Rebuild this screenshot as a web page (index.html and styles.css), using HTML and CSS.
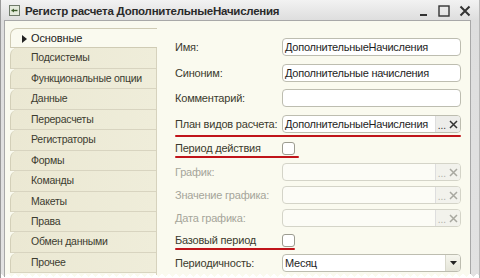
FILE: index.html
```html
<!DOCTYPE html>
<html lang="ru">
<head>
<meta charset="utf-8">
<link rel="stylesheet" href="styles.css">
</head>
<body>
<div class="window">
  <div class="titlebar">
    <svg class="app-icon" width="11" height="11" viewBox="0 0 11 11"><rect x="0.5" y="0.5" width="10" height="10" fill="#e4eadc" stroke="#6f7a6a"/><path d="M2.5 5.5h6" stroke="#3b5a2a" stroke-width="1.4"/><path d="M5 3.5l-2.5 2 2.5 2" fill="#3b5a2a"/></svg>
    <span class="title">Регистр расчета ДополнительныеНачисления</span>
    <div class="controls">
      <svg width="10" height="12" viewBox="0 0 10 12"><rect x="1" y="9" width="7" height="2" fill="#333"/></svg>
      <svg width="12" height="12" viewBox="0 0 12 12"><rect x="1" y="1" width="10" height="10" fill="none" stroke="#333" stroke-width="1.4"/></svg>
      <svg width="12" height="12" viewBox="0 0 12 12"><path d="M1.5 1.5l9 9M10.5 1.5l-9 9" stroke="#333" stroke-width="2"/></svg>
    </div>
  </div>
  <div class="frame">
    <ul class="tabs">
      <li class="tab active"><span class="arrow"></span>Основные</li>
      <li class="tab">Подсистемы</li>
      <li class="tab">Функциональные опции</li>
      <li class="tab">Данные</li>
      <li class="tab">Перерасчеты</li>
      <li class="tab">Регистраторы</li>
      <li class="tab">Формы</li>
      <li class="tab">Команды</li>
      <li class="tab">Макеты</li>
      <li class="tab">Права</li>
      <li class="tab">Обмен данными</li>
      <li class="tab">Прочее</li>
    </ul>
    <div class="form">
      <div class="row r1"><span class="label">Имя:</span><div class="field"><span class="val">ДополнительныеНачисления</span></div></div>
      <div class="row r2"><span class="label">Синоним:</span><div class="field"><span class="val">Дополнительные начисления</span></div></div>
      <div class="row r3"><span class="label">Комментарий:</span><div class="field"><span class="val"></span></div></div>
      <div class="row r4 mark mark-long"><span class="label">План видов расчета:</span><div class="field"><span class="val">ДополнительныеНачисления</span><span class="btns"><span class="dots">...</span><svg class="x" width="9" height="9" viewBox="0 0 9 9"><path d="M1 1l7 7M8 1l-7 7" stroke="#333" stroke-width="1.5"/></svg></span></div></div>
      <div class="row r5 mark mark-short"><span class="label">Период действия</span><span class="check"></span></div>
      <div class="row r6 off"><span class="label">График:</span><div class="field dis"><span class="val"></span><span class="btns"><span class="dots">...</span><svg class="x" width="9" height="9" viewBox="0 0 9 9"><path d="M1 1l7 7M8 1l-7 7" stroke="#a8a8a0" stroke-width="1.5"/></svg></span></div></div>
      <div class="row r7 off"><span class="label">Значение графика:</span><div class="field dis"><span class="val"></span><span class="btns"><span class="dots">...</span><svg class="x" width="9" height="9" viewBox="0 0 9 9"><path d="M1 1l7 7M8 1l-7 7" stroke="#a8a8a0" stroke-width="1.5"/></svg></span></div></div>
      <div class="row r8 off"><span class="label">Дата графика:</span><div class="field dis"><span class="val"></span><span class="btns"><span class="dots">...</span><svg class="x" width="9" height="9" viewBox="0 0 9 9"><path d="M1 1l7 7M8 1l-7 7" stroke="#a8a8a0" stroke-width="1.5"/></svg></span></div></div>
      <div class="row r9 mark mark-short2"><span class="label">Базовый период</span><span class="check"></span></div>
      <div class="row r10"><span class="label">Периодичность:</span><div class="field"><span class="val">Месяц</span><span class="drop"><svg width="7" height="4" viewBox="0 0 7 4"><path d="M0 0h7L3.5 4z" fill="#222"/></svg></span></div></div>
    </div>
  </div>
  <div class="torn"></div>
</div>
</body>
</html>
```

FILE: styles.css
```css
* { box-sizing: border-box; }
html, body { margin: 0; padding: 0; }
body {
  width: 480px;
  height: 278px;
  overflow: hidden;
  background: #ffffff;
  font-family: "Liberation Sans", Arial, sans-serif;
}
.window {
  position: relative;
  width: 480px;
  height: 278px;
  background: linear-gradient(#f2f2f2, #dedede 20px, #e2e2e2);
  border-left: 1px solid #9a9a9a;
  border-right: 1px solid #b8b8b8;
  overflow: hidden;
}
.titlebar {
  height: 20px;
  display: flex;
  align-items: center;
  padding-left: 8px;
  padding-top: 1px;
}
.app-icon { flex: none; }
.title {
  margin-left: 5px;
  font-weight: bold;
  font-size: 11.5px;
  color: #2a2a2a;
  letter-spacing: -0.25px;
}
.controls {
  margin-left: auto;
  display: flex;
  align-items: center;
  gap: 9px;
  padding-right: 8px;
}
.frame {
  margin-left: 3px;
  width: 467px;
  height: 270px;
  border: 1px solid #a8a8a8;
  background: #fafaef;
  display: flex;
  padding: 7px 0 0 5px;
}
.tabs {
  list-style: none;
  margin: 0;
  padding: 0;
  width: 147px;
  flex: none;
  border-right: 1px solid #d6d2bd;
}
.tab {
  height: 20.45px;
  line-height: 19px;
  font-size: 10.5px;
  letter-spacing: -0.25px;
  color: #3c3c30;
  padding-left: 20px;
  background: linear-gradient(90deg, #ebe8d3, #efedda);
  border-left: 1px solid #d3cfb8;
  border-bottom: 1px solid #d8d4c0;
  border-top-left-radius: 7px;
  white-space: nowrap;
}
.tab.active {
  background: #fafaef;
  border: 1px solid #cfcbb4;
  border-right: none;
  margin-right: -1px;
  position: relative;
  padding-left: 11px;
  color: #222;
  font-size: 11px;
  letter-spacing: -0.1px;
}
.arrow {
  display: inline-block;
  width: 0; height: 0;
  border-left: 5px solid #222;
  border-top: 4px solid transparent;
  border-bottom: 4px solid transparent;
  margin-right: 4px;
  vertical-align: -1px;
}
.form {
  flex: 1;
  padding: 10px 0 0 18px;
  display: flex;
  flex-direction: column;
}
.row {
  position: relative;
  height: 18px;
  display: flex;
  align-items: center;
  font-size: 11px;
  color: #3a3a2e;
}
.r1 { margin-top: 0; }
.r2 { margin-top: 8px; }
.r3 { margin-top: 7px; }
.r4 { margin-top: 8px; }
.r5 { margin-top: 6px; }
.r6 { margin-top: 6px; }
.r7 { margin-top: 5px; }
.r8 { margin-top: 5px; }
.r9 { margin-top: 4px; }
.r10 { margin-top: 5px; }
.label {
  width: 107px;
  flex: none;
  white-space: nowrap;
  letter-spacing: -0.2px;
}
.off .label { color: #a5a59a; }
.field {
  width: 179px;
  height: 18px;
  background: #ffffff;
  border: 1px solid #bdbdb0;
  border-radius: 4px;
  display: flex;
  align-items: center;
  overflow: hidden;
}
.field.dis { background: #fcfcf6; border-color: #d4d4c8; }
.val {
  flex: 1;
  padding-left: 2px;
  font-size: 11px;
  color: #1e1e1e;
  white-space: nowrap;
  letter-spacing: -0.25px;
}
.btns {
  display: flex;
  align-items: center;
  height: 100%;
  background: #ededea;
  border-left: 1px solid #dedede;
  padding: 0 2px 0 2px;
  gap: 3px;
}
.dis .btns { background: #f2f2ec; }
.dots {
  font-size: 10px;
  line-height: 10px;
  color: #333;
  padding-top: 4px;
}
.dis .dots { color: #b0b0a8; }
.x { display: block; }
.check {
  width: 13px;
  height: 13px;
  background: #fff;
  border: 1px solid #9c9c90;
  border-radius: 3px;
}
.drop {
  width: 15px;
  height: 100%;
  border-left: 1px solid #d8d8cc;
  background: linear-gradient(#f6f6ee, #e4e4d8);
  display: flex;
  align-items: center;
  justify-content: center;
}
.mark::after {
  content: "";
  position: absolute;
  left: 0;
  height: 2px;
  background: #c0141a;
  border-radius: 1px;
}
.mark-long::after { top: 20px; width: 286px; }
.mark-short::after { top: 17px; width: 124px; }
.mark-short2::after { top: 17px; width: 120px; }
.torn {
  position: absolute;
  left: 0;
  right: 0;
  bottom: 0;
  height: 7px;
  background:
    linear-gradient(-45deg, #ffffff 3.5px, transparent 0),
    linear-gradient(45deg, #ffffff 3.5px, transparent 0);
  background-position: left bottom;
  background-repeat: repeat-x;
  background-size: 7px 7px;
}
```
